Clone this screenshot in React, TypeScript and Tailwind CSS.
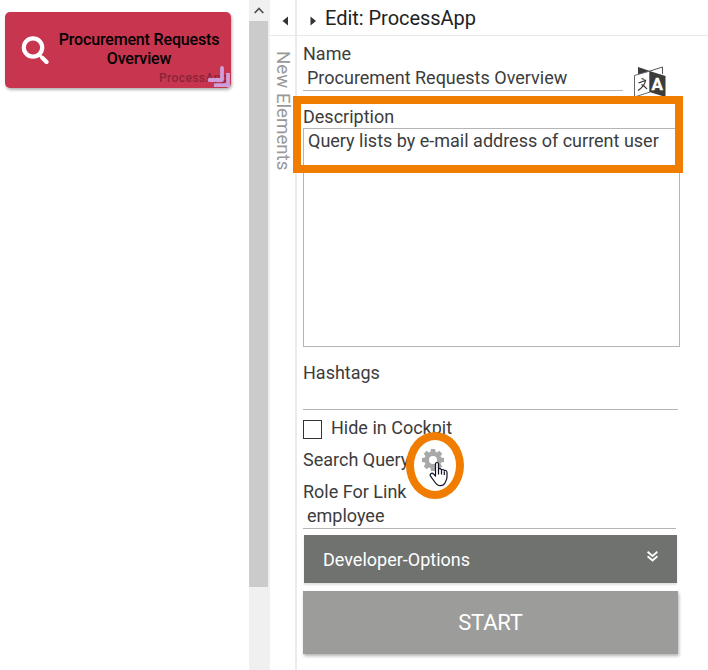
import type { ReactNode } from "react";

const teeth = [0, 45, 90, 135, 180, 225, 270, 315];

const SearchIcon = () => (
    <svg className="ml-[16px] w-7 h-7 shrink-0" viewBox="0 0 28 28" fill="none" stroke="#fff">
        <circle cx="12" cy="11.500" r="9.200" strokeWidth="4.200" />
        <path d="M18.500 19l2.500 2.500" strokeWidth="3" />
        <path d="M21.500 22l4 4" strokeWidth="4.200" strokeLinecap="round" />
    </svg>
);

const ResizeIcon = () => (
    <svg className="absolute right-[1px] bottom-0 w-[23px] h-[22px]" viewBox="0 0 23 22" fill="none" stroke="#cf9edb" strokeWidth="3.800">
        <path d="M2.500 14H15V2" strokeLinejoin="round" strokeLinecap="round" />
        <path d="M7 19.200H21V7" />
    </svg>
);

const TranslateIcon = () => (
    <svg className="w-8 h-8" viewBox="0 0 32 32">
        <path d="M4 1l12 4v5L4 8z" fill="#3c3c3c" />
        <path d="M16 5l12.500-4v7" fill="#fff" stroke="#555" />
        <path d="M.5 9.500L16 5v21L.5 31z" fill="#fff" stroke="#666" />
        <path d="M15.500 5L31.500 10v21l-16-5z" fill="#3c3c3c" />
        <path d="M7.500 12.500l3 1M4.500 17l7-2.500c-.5 4-3 7-7.500 10M7.500 18.500c2 1 4 2.500 5.500 4.500" fill="none" stroke="#333" strokeWidth="1.200" />
        <text x="17.500" y="24" fill="#fff" stroke="#fff" strokeWidth=".4" fontFamily="Roboto, sans-serif" fontWeight="700" fontSize="17">A</text>
    </svg>
);

const GearIcon = () => (
    <svg className="w-[22px] h-[22px]" viewBox="-11 -11 22 22" fill="#a8a8a8">
        {teeth.map((angle) => (
            <path key={angle} d="M-2.700 -7L-2.100 -11H2.100L2.700 -7z" transform={`rotate(${angle})`} />
        ))}
        <circle r="6.200" fill="none" stroke="#a8a8a8" strokeWidth="4.400" />
    </svg>
);

const HandCursor = () => (
    <svg className="absolute left-[428.5px] top-[461px] w-[19px] h-[26px]" viewBox="0 0 19 26">
        <path
            d="M6.500 15V3.300C6.500 .9 9.500.9 9.500 3.300V8.500C9.800 7 12.300 7.300 12.500 9.300C13 8 15.200 8.300 15.300 10C16 9 17.900 9.300 18 11.500V16C18 19 16.500 20 16 22C15 24 13.500 24.700 11.500 24.700C8.500 24.700 7 23 5.800 21L1.500 15.200C.3 13 2.800 11.500 4.200 12.700z"
            fill="#fff" stroke="#111122" strokeWidth="1.200" strokeLinejoin="round"
        />
        <path d="M9.500 8.500v5M12.500 9.500v4M15.300 10.500v3.500" stroke="#111122" strokeWidth="1.200" />
    </svg>
);

const Label = ({ children }: { children: ReactNode }) => (
    <div className="h-6 leading-6 whitespace-nowrap">{children}</div>
);

const App = () => {
    return (
        <div className="relative flex w-[708px] h-[670px] overflow-hidden bg-white text-[#3c3c3c] text-[18px] font-['Roboto',sans-serif]">
            {/* canvas */}
            <div className="w-[249px] pl-[5px] pt-3">
                <div className="relative flex items-center w-[226px] h-19 rounded-[5px] bg-[#c8354f] shadow-[1px_2px_3px_rgba(0,0,0,0.3)]">
                    <SearchIcon />
                    <div className="ml-[5px] w-[170px] pb-[2px] text-center text-[16px] leading-[19px] font-medium tracking-[-0.16px] text-black">
                        Procurement Requests Overview
                    </div>
                    <span className="absolute right-[3px] bottom-[3px] text-[12px] leading-[14px] font-medium tracking-[0.4px] text-[#8a2439]">
                        ProcessApp
                    </span>
                    <ResizeIcon />
                </div>
            </div>

            {/* scrollbar */}
            <div className="w-[21px] bg-[#f0f0f0]">
                <div className="flex h-[21px] w-[19px] items-center justify-center">
                    <svg className="w-[10px] h-[7px]" viewBox="0 0 10 7" fill="none" stroke="#505050" strokeWidth="1.800">
                        <path d="M.7 6L5 1.500 9.300 6" />
                    </svg>
                </div>
                <div className="h-[566px] w-[19px] bg-[#cbcbcb]" />
            </div>

            {/* collapsed palette */}
            <div className="w-[25px]">
                <div className="flex h-9 items-center justify-center border-b border-[#e8e8e8] pt-[6px] pl-[5px]">
                    <svg className="w-[6px] h-[10px]" viewBox="0 0 6 10" fill="#333"><path d="M6 .5v9L.5 5z" /></svg>
                </div>
                <div className="mt-[15px] h-[130px] w-[26px] text-[18.7px] leading-[26px] whitespace-nowrap text-[#999] [writing-mode:vertical-rl]">
                    New Elements
                </div>
            </div>

            {/* editor */}
            <div className="flex-1 border-l-2 border-[#ebebeb]">
                <div className="flex h-9 items-center border-b border-[#e8e8e8] pl-[13px]">
                    <svg className="mt-[6px] w-[6px] h-[10px]" viewBox="0 0 6 10" fill="#333"><path d="M.5 .5v9L6 5z" /></svg>
                    <span className="ml-[9px] text-[20px] tracking-[-0.03px] text-[#222]">Edit: ProcessApp</span>
                </div>
                <div className="pl-[6px] pt-[6px]">
                    <Label>Name</Label>
                    <div className="flex">
                        <div className="h-[25px] w-[320px] border-b border-[#b5b5b5] pl-1 leading-6">Procurement Requests Overview</div>
                        <div className="ml-[11px] h-[25px]"><TranslateIcon /></div>
                    </div>
                    <div className="mt-[14px] h-[23px] leading-6">Description</div>
                    <div className="h-[219px] w-[377px] border border-[#b5b5b5] pl-1 leading-6">
                        Query lists by e-mail address of current user
                    </div>
                    <div className="mt-[14px] h-[49px] w-[375px] border-b border-[#b5b5b5] leading-6">Hashtags</div>
                    <div className="mt-[6px] flex h-8">
                        <div className="mt-1 mr-[9px] h-[19px] w-[19px] border border-[#333]" />
                        <Label>Hide in Cockpit</Label>
                    </div>
                    <div className="flex h-8">
                        <Label>Search Query</Label>
                        <div className="ml-[13px] mt-[1px]"><GearIcon /></div>
                    </div>
                    <Label>Role For Link</Label>
                    <div className="h-[25px] w-[373px] border-b border-[#b5b5b5] pl-1 leading-6">employee</div>
                    <div className="mt-[6px] ml-[1px] flex h-12 w-[373px] justify-between bg-[#70726f] pl-[19px] pr-[19px] text-white shadow-[0_2px_2px_rgba(0,0,0,0.12)]">
                        <span className="leading-[49px]">Developer-Options</span>
                        <svg className="mt-4 w-[11px] h-[11px]" viewBox="0 0 11 11" fill="none" stroke="#fff" strokeWidth="1.800">
                            <path d="M.6.8l4.900 4.200L10.400.8M.6 5.300l4.900 4.200 4.900-4.200" />
                        </svg>
                    </div>
                    <div className="mt-2 flex h-[63px] w-[375px] items-center justify-center bg-[#9c9c9a] text-[22px] tracking-[-0.2px] text-white shadow-[1px_2px_3px_rgba(0,0,0,0.3)]">
                        START
                    </div>
                </div>
            </div>

            {/* callouts over the form */}
            <div className="absolute left-[293px] top-[96px] h-[77px] w-[390px] border-8 border-[#f07d00]" />
            <div className="absolute left-[406px] top-[432px] h-[67px] w-[58px] rounded-[50%] border-8 border-[#f07d00]" />
            <HandCursor />
        </div>
    );
};

export default App;
